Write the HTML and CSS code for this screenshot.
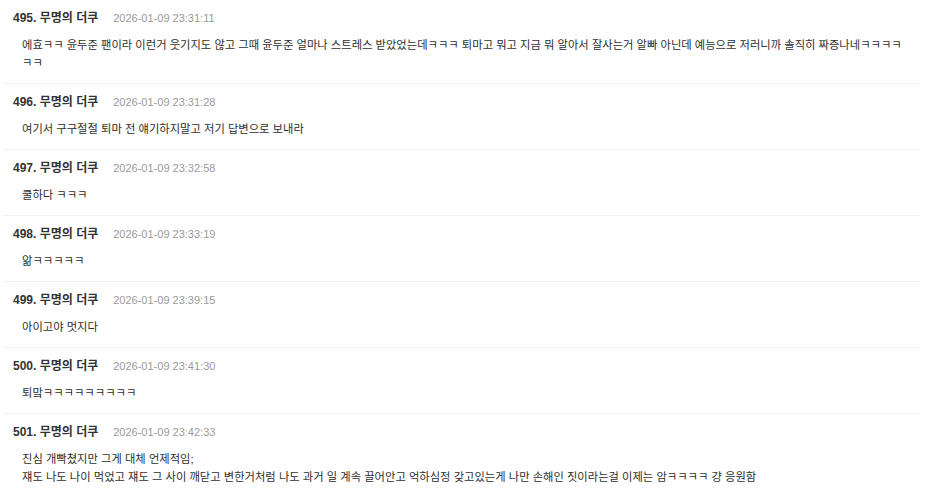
FILE: index.html
```html
<!DOCTYPE html>
<html lang="ko">
<head>
<meta charset="utf-8">
<title>댓글</title>
<link rel="stylesheet" href="styles.css">
</head>
<body>
<div class="list">
  <div class="post">
    <div class="head"><span class="name">495. 무명의 더쿠</span><span class="date">2026-01-09 23:31:11</span></div>
    <div class="body">에효ㅋㅋ 윤두준 팬이라 이런거 웃기지도 않고 그때 윤두준 얼마나 스트레스 받았었는데ㅋㅋㅋ 퇴마고 뭐고 지금 뭐 알아서 잘사는거 알빠 아닌데 예능으로 저러니까 솔직히 짜증나네ㅋㅋㅋㅋㅋㅋ</div>
  </div>
  <div class="post">
    <div class="head"><span class="name">496. 무명의 더쿠</span><span class="date">2026-01-09 23:31:28</span></div>
    <div class="body">여기서 구구절절 퇴마 전 얘기하지말고 저기 답변으로 보내라</div>
  </div>
  <div class="post">
    <div class="head"><span class="name">497. 무명의 더쿠</span><span class="date">2026-01-09 23:32:58</span></div>
    <div class="body">쿨하다 ㅋㅋㅋ</div>
  </div>
  <div class="post">
    <div class="head"><span class="name">498. 무명의 더쿠</span><span class="date">2026-01-09 23:33:19</span></div>
    <div class="body">앎ㅋㅋㅋㅋㅋ</div>
  </div>
  <div class="post">
    <div class="head"><span class="name">499. 무명의 더쿠</span><span class="date">2026-01-09 23:39:15</span></div>
    <div class="body">아이고야 멋지다</div>
  </div>
  <div class="post">
    <div class="head"><span class="name">500. 무명의 더쿠</span><span class="date">2026-01-09 23:41:30</span></div>
    <div class="body">퇴맠ㅋㅋㅋㅋㅋㅋㅋㅋㅋ</div>
  </div>
  <div class="post">
    <div class="head"><span class="name">501. 무명의 더쿠</span><span class="date">2026-01-09 23:42:33</span></div>
    <div class="body">진심 개빡쳤지만 그게 대체 언제적임;<br>쟤도 나도 나이 먹었고 쟤도 그 사이 깨닫고 변한거처럼 나도 과거 일 계속 끌어안고 억하심정 갖고있는게 나만 손해인 짓이라는걸 이제는 암ㅋㅋㅋㅋ 걍 응원함</div>
  </div>
</div>
</body>
</html>
```

FILE: styles.css
```css
html, body {
  margin: 0;
  padding: 0;
  background: #ffffff;
}
body {
  font-family: "Liberation Sans", "Noto Sans CJK KR", sans-serif;
  color: #333333;
  font-size: 11px;
}
.list {
  margin-left: 3px;
  width: 917px;
}
.post {
  padding: 9px 0 11px 10px;
  border-bottom: 1px solid #f2f2f2;
}
.head {
  display: flex;
  align-items: baseline;
  gap: 15px;
  line-height: 18px;
}
.name {
  font-weight: bold;
  font-size: 12px;
  color: #333333;
}
.date {
  color: #9a9a9a;
  font-size: 11px;
}
.body {
  margin-top: 9px;
  padding-left: 9px;
  padding-right: 12px;
  line-height: 18px;
  font-size: 11.3px;
  color: #2e2e2e;
}
```
